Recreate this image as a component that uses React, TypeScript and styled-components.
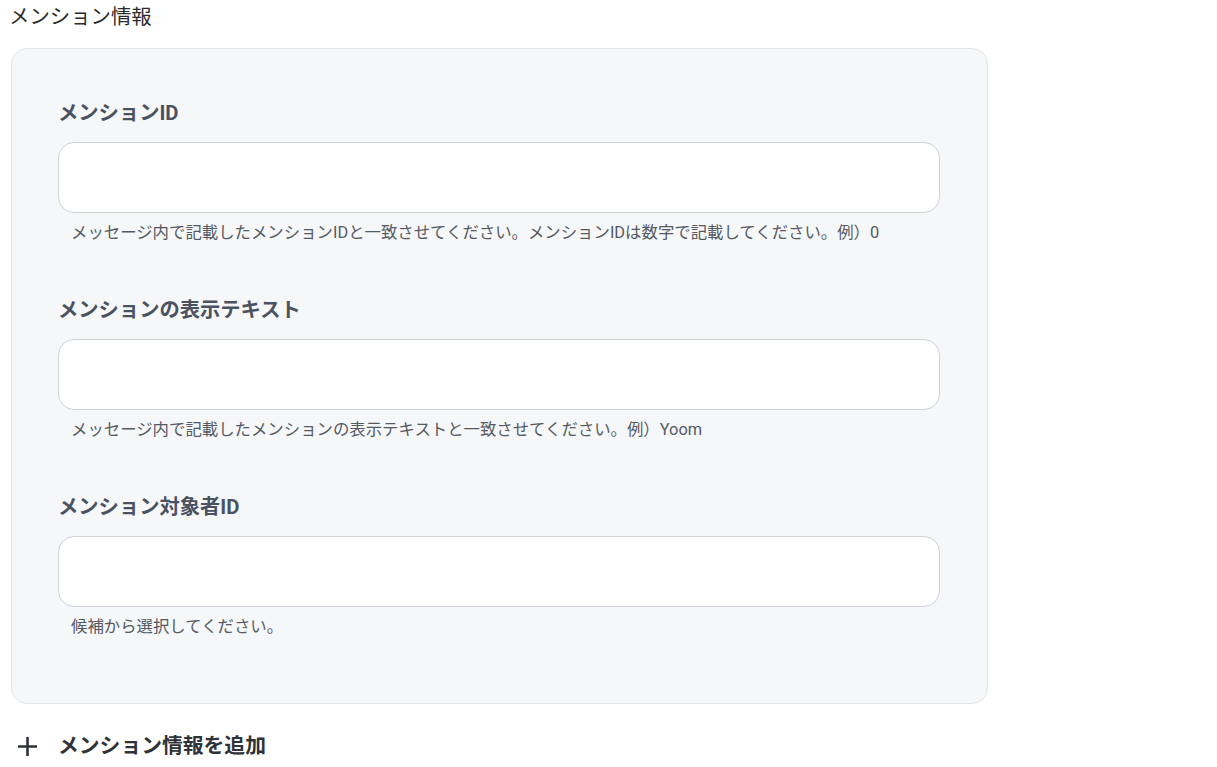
import React from "react";
import styled, { createGlobalStyle } from "styled-components";

const GlobalStyle = createGlobalStyle`
  html, body {
    margin: 0;
    padding: 0;
    background: #ffffff;
  }
  body {
    font-family: Roboto, "Noto Sans CJK JP", "Noto Sans", sans-serif;
    -webkit-font-smoothing: antialiased;
  }
`;

const Page = styled.div`
  padding: 3px 229px 0 11px;
  display: flex;
  flex-direction: column;
`;

const SectionTitle = styled.h2`
  margin: 0 0 0 -2px;
  font-size: 20.4px;
  line-height: 28px;
  font-weight: 400;
  color: #2b2b2b;
`;

const Panel = styled.div`
  margin-top: 17px;
  background: #f6f7f9;
  border: 1px solid #e2e4e8;
  border-radius: 16px;
  padding: 49px 47px 65px 46px;
  display: flex;
  flex-direction: column;
  gap: 51px;
`;

const Field = styled.div`
  display: flex;
  flex-direction: column;
`;

const Label = styled.label`
  font-size: 20.3px;
  line-height: 28px;
  font-weight: 700;
  color: #4a5261;
  transform: translateY(1px);
`;

const Input = styled.input`
  margin-top: 16px;
  box-sizing: border-box;
  width: 100%;
  height: 71px;
  border: 1px solid #cdd2db;
  border-radius: 16px;
  background: #ffffff;
  padding: 0 16px;
  font: inherit;
  outline: none;
`;

const Help = styled.p`
  margin: 9px 0 0 13px;
  font-size: 16.4px;
  line-height: 22px;
  color: #555a62;
`;

const AddButton = styled.button`
  margin-top: 28px;
  align-self: flex-start;
  display: flex;
  align-items: center;
  gap: 20px;
  padding: 0 0 0 6px;
  border: none;
  background: transparent;
  font-family: inherit;
  font-size: 20.8px;
  line-height: 28px;
  font-weight: 700;
  color: #2f3237;
  cursor: pointer;
`;

const PlusIcon = () => (
  <svg width="21" height="21" viewBox="0 0 21 21" aria-hidden="true">
    <path d="M10.5 1v19M1 10.5h19" stroke="#2f3237" strokeWidth="2.6" fill="none" />
  </svg>
);

const fields = [
  {
    label: "メンションID",
    help: "メッセージ内で記載したメンションIDと一致させてください。メンションIDは数字で記載してください。例）0",
  },
  {
    label: "メンションの表示テキスト",
    help: "メッセージ内で記載したメンションの表示テキストと一致させてください。例）Yoom",
  },
  {
    label: "メンション対象者ID",
    help: "候補から選択してください。",
  },
];

export default function App() {
  return (
    <>
      <GlobalStyle />
      <Page>
        <SectionTitle>メンション情報</SectionTitle>
        <Panel>
          {fields.map((f) => (
            <Field key={f.label}>
              <Label>{f.label}</Label>
              <Input type="text" />
              <Help>{f.help}</Help>
            </Field>
          ))}
        </Panel>
        <AddButton type="button">
          <PlusIcon />
          メンション情報を追加
        </AddButton>
      </Page>
    </>
  );
}
